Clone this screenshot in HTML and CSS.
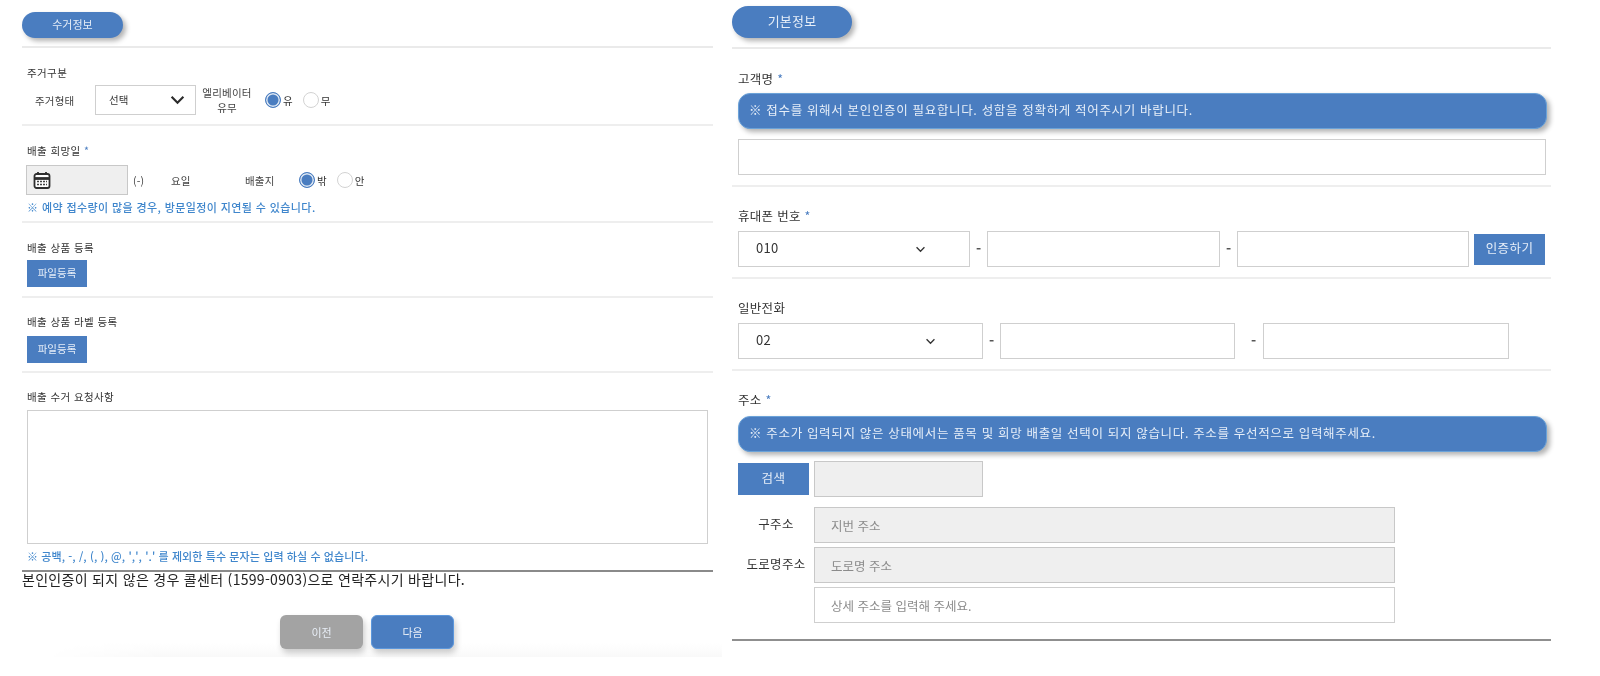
FILE: index.html
```html
<!DOCTYPE html>
<html lang="ko">
<head>
<meta charset="utf-8">
<title>수거정보</title>
<link rel="stylesheet" href="styles.css">
</head>
<body>
<main class="page">
  <div class="col col-left">
    <div class="fade"></div>
    <header class="head head-left"><span class="pill pill-left">수거정보</span></header>

    <section class="sec s-house">
      <div class="lab">주거구분</div>
      <div class="row r-house">
        <span class="tag t-house">주거형태</span>
        <div class="sel sel-house"><span>선택</span>
          <svg class="chev-big" viewBox="0 0 14 9"><path d="M1.500 1.500 7 7l5.500-5.500" fill="none" stroke="#2b2b2b" stroke-width="2"/></svg>
        </div>
        <span class="tag t-elev">엘리베이터<br>유무</span>
        <label class="rad r-first"><input type="radio" name="e" checked>유</label>
        <label class="rad"><input type="radio" name="e">무</label>
      </div>
    </section>

    <section class="sec s-date">
      <div class="lab">배출 희망일 <i>*</i></div>
      <div class="row r-date">
        <div class="date">
          <svg class="cal" viewBox="0 0 18 18"><rect x="1.500" y="3" width="15" height="14" rx="2" fill="#fff" stroke="#2f2f2f" stroke-width="1.800"/><path d="M1.500 7.500h15" stroke="#2f2f2f" stroke-width="2.800"/><path d="M5 1v3M13 1v3" stroke="#2f2f2f" stroke-width="1.800"/><path d="M4 10.500h10M4 13.500h10" stroke="#444" stroke-width="1.600" stroke-dasharray="2 1"/></svg>
        </div>
        <span class="tag t-paren">(-)</span>
        <span class="tag t-day">요일</span>
        <span class="tag t-place">배출지</span>
        <label class="rad"><input type="radio" name="p" checked>밖</label>
        <label class="rad"><input type="radio" name="p">안</label>
      </div>
      <p class="note n-date">※ 예약 접수량이 많을 경우, 방문일정이 지연될 수 있습니다.</p>
    </section>

    <section class="sec s-file">
      <div class="lab">배출 상품 등록</div>
      <button class="file" type="button">파일등록</button>
    </section>

    <section class="sec s-file s-file2">
      <div class="lab">배출 상품 라벨 등록</div>
      <button class="file" type="button">파일등록</button>
    </section>

    <section class="s-req">
      <div class="lab">배출 수거 요청사항</div>
      <textarea class="area"></textarea>
      <p class="note n-req">※ 공백, -, /, (, ), @, ',', '.' 를 제외한 특수 문자는 입력 하실 수 없습니다.</p>
    </section>

    <p class="call">본인인증이 되지 않은 경우 콜센터 (1599-0903)으로 연락주시기 바랍니다.</p>

    <div class="actions">
      <button class="act act-prev" type="button">이전</button>
      <button class="act act-next" type="button">다음</button>
    </div>
  </div>

  <div class="col col-right">
    <header class="head head-right"><span class="pill pill-right">기본정보</span></header>

    <section class="bsec b-name">
      <div class="blab">고객명 <i>*</i></div>
      <div class="banner">※ 접수를 위해서 본인인증이 필요합니다. 성함을 정확하게 적어주시기 바랍니다.</div>
      <input class="inp inp-full" type="text">
    </section>

    <section class="bsec b-phone">
      <div class="blab">휴대폰 번호 <i>*</i></div>
      <div class="row r-phone">
        <div class="sel sel-phone"><span>010</span>
          <svg class="chev" viewBox="0 0 12 8"><path d="M1.500 1.500 6 6l4.500-4.500" fill="none" stroke="#333" stroke-width="1.500"/></svg>
        </div>
        <span class="dash">-</span>
        <input class="inp inp-p2" type="text">
        <span class="dash">-</span>
        <input class="inp inp-p3" type="text">
        <button class="verify" type="button">인증하기</button>
      </div>
    </section>

    <section class="bsec b-tel">
      <div class="blab">일반전화</div>
      <div class="row r-tel">
        <div class="sel sel-tel"><span>02</span>
          <svg class="chev" viewBox="0 0 12 8"><path d="M1.500 1.500 6 6l4.500-4.500" fill="none" stroke="#333" stroke-width="1.500"/></svg>
        </div>
        <span class="dash dash-t1">-</span>
        <input class="inp inp-t2" type="text">
        <span class="dash dash-t2">-</span>
        <input class="inp inp-t3" type="text">
      </div>
    </section>

    <section class="b-addr">
      <div class="blab">주소 <i>*</i></div>
      <div class="banner">※ 주소가 입력되지 않은 상태에서는 품목 및 희망 배출일 선택이 되지 않습니다. 주소를 우선적으로 입력해주세요.</div>
      <div class="row r-search">
        <button class="search" type="button">검색</button>
        <input class="inp inp-zip" type="text" disabled>
      </div>
      <div class="row r-addr">
        <span class="alab">구주소</span>
        <input class="inp inp-addr" type="text" placeholder="지번 주소" disabled>
      </div>
      <div class="row r-addr">
        <span class="alab">도로명주소</span>
        <input class="inp inp-addr" type="text" placeholder="도로명 주소" disabled>
      </div>
      <div class="row r-addr">
        <span class="alab"></span>
        <input class="inp inp-addr inp-open" type="text" placeholder="상세 주소를 입력해 주세요.">
      </div>
    </section>
  </div>
</main>
</body>
</html>
```

FILE: styles.css
```css
* { box-sizing: border-box; }
html, body { margin: 0; padding: 0; background: #fff; }
body {
  height: 676px;
  overflow: hidden;
  font-family: "Noto Sans CJK KR", "Noto Sans", sans-serif;
  color: #333;
}
.page { display: flex; filter: blur(0.55px); }
.col-left { width: 691px; margin-left: 22px; position: relative; }
.col-right { width: 819px; margin-left: 19px; }
p { margin: 0; }
.row { display: flex; align-items: center; }
i { font-style: normal; color: #4a7dc0; }

.fade {
  position: absolute; left: 22px; top: 643px; width: 678px; height: 14px;
  background: linear-gradient(to bottom, #fff, #f9f9f9);
  -webkit-mask-image: linear-gradient(to right, transparent, #000 120px);
  mask-image: linear-gradient(to right, transparent, #000 120px);
}

.head { border-bottom: 2px solid #eaeaea; }
.head-left { height: 48px; padding-top: 12px; }
.head-right { height: 49px; padding-top: 6px; }
.pill {
  display: flex; align-items: center; justify-content: center;
  background: #4a7dc0; color: #e6eef8; border-radius: 16px;
  box-shadow: 3px 3px 5px rgba(0, 0, 0, .3);
}
.pill-left { width: 101px; height: 26px; font-size: 11px; padding-bottom: 2px; }
.pill-right { width: 120px; height: 32px; font-size: 13px; letter-spacing: .2px; padding-bottom: 3px; }

.sec { border-bottom: 2px solid #eeeeee; padding-left: 5px; }
.lab { font-size: 10.500px; line-height: 14px; color: #333; letter-spacing: .4px; }
.lab i { color: #4a7dc0; }

.s-house { height: 78px; padding-top: 18px; }
.r-house { margin-top: 5px; height: 30px; }
.tag { font-size: 10.500px; color: #444; letter-spacing: .2px; }
.t-house { width: 68px; padding-left: 8px; }
.t-elev { width: 62px; text-align: center; line-height: 15px; }
.sel {
  display: flex; align-items: center; justify-content: space-between;
  border: 1.500px solid #cfcfcf; background: #fff;
}
.sel span { position: relative; top: -1px; }
.sel-house { width: 101px; height: 30px; padding: 0 10px 0 13px; font-size: 10.500px; }
.chev-big { width: 15px; height: 10px; }
.rad { display: flex; align-items: center; font-size: 10.500px; color: #333; }
.r-first { margin-left: 7px; }
.rad input {
  appearance: none; margin: 0 2px 0 0; width: 16px; height: 16px;
  border: 1px solid #d2d2d2; border-radius: 50%; background: #fff;
}
.rad input:checked { background: #4a7dc0; border: 1px solid #4a7dc0; box-shadow: inset 0 0 0 1.500px #dfe8f3; }
.rad + .rad { margin-left: 10px; }

.s-date { height: 97px; padding-top: 18px; }
.r-date { margin-top: 7px; height: 30px; }
.date { width: 102px; height: 30px; margin-left: -1px; background: #efefef; border: 1.500px solid #c8c8c8; display: flex; align-items: center; padding-left: 6px; }
.cal { width: 18px; height: 18px; }
.t-paren { width: 38px; padding-left: 5px; }
.t-day { width: 79px; padding-left: 5px; }
.t-place { width: 54px; }
.note { font-size: 11px; color: #3f86cc; font-weight: 500; letter-spacing: .4px; }
.n-date { margin-top: 4px; line-height: 16px; }

.s-file { height: 75px; padding-top: 18px; }
.s-file2 { padding-top: 17px; }
.file {
  display: block; margin-top: 5px; width: 60px; height: 27px; border: 0; padding: 0 0 3px;
  background: #4a7dc0; color: #e6eef8; font: inherit; font-size: 10.500px;
}
.s-file2 .file { margin-top: 7px; }
.s-req { padding: 17px 0 0 5px; height: 199px; border-bottom: 2px solid #8a8a8a; }
.area { display: block; width: 681px; height: 134px; margin: 6px 0 0; border: 1.500px solid #cfcfcf; resize: none; background: #fff; }
.n-req { margin-top: 4px; line-height: 16px; letter-spacing: .1px; }
.call { font-size: 14px; line-height: 18px; color: #222; letter-spacing: .3px; position: relative; top: -2px; }

.actions { display: flex; gap: 8px; margin-top: 25px; padding-left: 258px; position: relative; }
.act {
  width: 83px; height: 34px; border: 0; border-radius: 6px; color: #e8eef6;
  font: inherit; font-size: 11px; padding-bottom: 1px; box-shadow: 2px 4px 6px rgba(0, 0, 0, .2);
}
.act-prev { background: #a3a3a3; }
.act-next { background: #4a7dc0; border: 1px solid #5c97dc; }

.bsec { border-bottom: 2px solid #eeeeee; padding-left: 6px; }
.blab { font-size: 12.500px; line-height: 18px; color: #333; letter-spacing: .3px; }
.banner {
  display: flex; align-items: center; height: 36px; width: 809px; padding: 0 0 3px 10px;
  background: #4a7dc0; color: #e6eef8; border-radius: 12px; font-size: 12.500px; letter-spacing: .66px;
  border: 1px solid #6ba2d8;
  box-shadow: 3px 3px 5px rgba(0, 0, 0, .3);
}
.inp { height: 36px; border: 1.500px solid #cfcfcf; background: #fff; padding: 0 16px; font: inherit; font-size: 12.500px; }
.inp::placeholder { color: #8b8b8b; opacity: 1; }
.inp:disabled { background: #efefef; border-color: #c8c8c8; }
.inp-full { display: block; width: 808px; margin-top: 10px; }

.b-name { height: 138px; padding-top: 21px; }
.b-name .banner { margin-top: 5px; }
.b-phone { height: 92px; padding-top: 20px; }
.b-tel { height: 92px; padding-top: 20px; }
.r-phone, .r-tel { margin-top: 6px; height: 36px; }
.sel-phone, .sel-tel { height: 36px; font-size: 13px; letter-spacing: .3px; }
.sel-phone span, .sel-tel span { top: -2px; }
.sel-phone { width: 232px; padding: 0 43px 0 17px; }
.sel-tel { width: 245px; padding: 0 46px 0 17px; }
.chev { width: 11px; height: 7px; }
.dash { width: 17px; text-align: center; font-size: 14px; font-weight: 700; color: #555; position: relative; top: -1px; }
.inp-p2 { width: 233px; }
.inp-p3 { width: 232px; }
.verify { width: 71px; height: 31px; margin-left: 5px; border: 0; padding: 0 0 3px; background: #4a7dc0; color: #e6eef8; font: inherit; font-size: 12.500px; letter-spacing: .4px; }
.dash-t1 { width: 17px; }
.inp-t2 { width: 235px; }
.dash-t2 { width: 28px; padding-left: 9px; }
.inp-t3 { width: 246px; }

.b-addr { height: 270px; padding: 20px 0 0 6px; border-bottom: 2px solid #8f8f8f; }
.b-addr .banner { margin-top: 7px; }
.r-search { margin-top: 9px; height: 36px; }
.search { width: 71px; height: 32px; border: 0; padding: 0 0 4px; background: #4a7dc0; color: #e6eef8; font: inherit; font-size: 12.500px; letter-spacing: .4px; }
.inp-zip { width: 169px; margin-left: 5px; }
.r-addr { margin-top: 4px; height: 36px; }
.r-search + .r-addr { margin-top: 10px; }
.alab { width: 76px; padding-bottom: 4px; text-align: center; font-size: 12.500px; color: #333; letter-spacing: .3px; }
.inp-addr { width: 581px; }
```
